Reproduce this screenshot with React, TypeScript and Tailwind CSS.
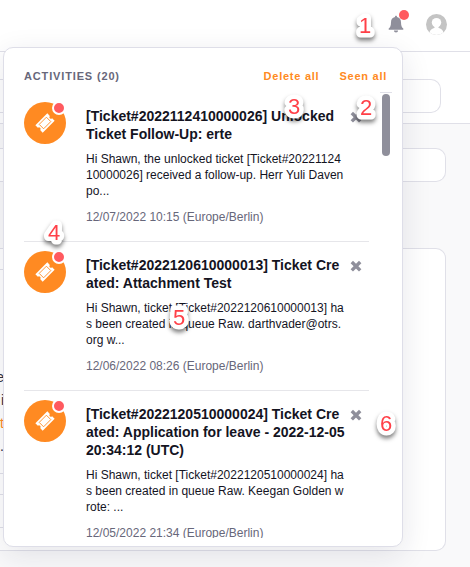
import React from 'react';

type Activity = { title: string[]; body: string[]; date: string };

const activities: Activity[] = [
  {
    title: ['[Ticket#2022112410000026] Unlocked', 'Ticket Follow-Up: erte'],
    body: ['Hi Shawn, the unlocked ticket [Ticket#20221124', '10000026] received a follow-up. Herr Yuli Daven', 'po...'],
    date: '12/07/2022 10:15 (Europe/Berlin)',
  },
  {
    title: ['[Ticket#2022120610000013] Ticket Cre', 'ated: Attachment Test'],
    body: ['Hi Shawn, ticket [Ticket#2022120610000013] ha', 's been created in queue Raw. darthvader@otrs.', 'org w...'],
    date: '12/06/2022 08:26 (Europe/Berlin)',
  },
  {
    title: ['[Ticket#2022120510000024] Ticket Cre', 'ated: Application for leave - 2022-12-05', '20:34:12 (UTC)'],
    body: ['Hi Shawn, ticket [Ticket#2022120510000024] ha', 's been created in queue Raw. Keegan Golden w', 'rote: ...'],
    date: '12/05/2022 21:34 (Europe/Berlin)',
  },
];

function TicketIcon() {
  return (
    <svg width="22" height="22" viewBox="-11 -11 22 22" className="block">
      <g transform="rotate(-45) scale(0.94)">
        <path d="M-9-5.5H9V-1.700A1.700 1.700 0 0 0 9 1.700V5.500H-9V1.700A1.700 1.700 0 0 0-9-1.700Z" fill="#fff" />
        <rect x="-5.400" y="-3.300" width="10.800" height="6.600" fill="none" stroke="#ff8a22" strokeWidth="0.900" />
      </g>
    </svg>
  );
}

function CloseIcon() {
  return (
    <svg width="12" height="12" viewBox="0 0 12 12" className="block">
      <path d="M1.8 2 10.2 10.400M10.200 2 1.800 10.400" stroke="#8f8f9b" strokeWidth="3.400" />
    </svg>
  );
}

function ActivityRow({ item, last }: { item: Activity; last: boolean }) {
  return (
    <div className={`flex w-[345px] pt-[9px] pb-4 ${last ? '' : 'border-b border-[#e6e6ea]'}`}>
      <div className="relative flex h-[42px] w-[42px] shrink-0 items-center justify-center rounded-full bg-[#ff8a22]">
        <TicketIcon />
        <span className="absolute -top-[1px] left-[28px] h-[14px] w-[14px] rounded-full border-2 border-white bg-[#ff5a5f]" />
      </div>
      <div className="ml-5 w-[264px] shrink-0 whitespace-nowrap pt-[5px]">
        <div className="text-[14px] font-bold leading-[18px] text-[#14141f]">
          {item.title.map((t) => <div key={t}>{t}</div>)}
        </div>
        <div className="mt-2 text-[12px] leading-4 text-[#14141f]">
          {item.body.map((t) => <div key={t}>{t}</div>)}
        </div>
        <div className="mt-[10px] text-[12px] leading-4 text-[#67677a]">{item.date}</div>
      </div>
      <div className="pt-[9px]"><CloseIcon /></div>
    </div>
  );
}

const markers = [
  { n: '1', x: 365, y: 25 },
  { n: '2', x: 366, y: 107 },
  { n: '3', x: 294, y: 106 },
  { n: '4', x: 54, y: 232 },
  { n: '5', x: 179, y: 317 },
  { n: '6', x: 386, y: 423 },
];

export default function App() {
  return (
    <div className="relative h-[567px] w-[470px] overflow-hidden bg-[#f9f9fa] font-['Liberation_Sans',Arial,sans-serif]">
      <header className="flex h-[52px] items-start justify-end border-b border-[#e0e0e8] bg-white pr-[23px]">
        <div className="relative mt-[15px] mr-[22px]">
          <svg width="16" height="18" viewBox="0 0 16 18" className="block">
            <path d="M8 .8C7.3.8 7 1.3 7 2 4.3 2.5 3 4.6 3 7.2 3 11 2 12.3.7 13.6V14.8H15.3V13.6C14 12.3 13 11 13 7.2 13 4.6 11.700 2.500 9 2 9 1.300 8.700.8 8 .8ZM5.900 15.500A2.100 2.100 0 0 0 10.100 15.500Z" fill="#8f8f9b" />
          </svg>
          <span className="absolute -top-[5px] left-[11px] h-[10px] w-[10px] rounded-full bg-[#ff5a5f]" />
        </div>
        <svg width="21" height="21" viewBox="0 0 21 21" className="mt-[14px] block">
          <defs><clipPath id="avatar"><circle cx="10.5" cy="10.500" r="10.500" /></clipPath></defs>
          <g clipPath="url(#avatar)">
            <rect width="21" height="21" fill="#c4c4c4" />
            <circle cx="10.500" cy="8.600" r="4.700" fill="#fff" />
            <path d="M8.500 11H12.500V14C15.500 14.800 17.500 16 18 21H3C3.500 16 5.500 14.800 8.500 14Z" fill="#fff" />
          </g>
        </svg>
      </header>
      <div className="h-[72px] border-b border-[#e0e0e8] bg-white pt-[27px]">
        <div className="h-[34px] w-[441px] rounded-r-[10px] border border-l-0 border-[#e0e0e8] bg-white" />
      </div>
      <div className="mt-6 h-[34px] w-[446px] rounded-r-[10px] border border-l-0 border-[#e0e0e8] bg-white" />
      <main className="mt-[66px] h-[303px] w-[446px] overflow-hidden rounded-r-[10px] border border-l-0 border-[#e0e0e8] bg-white">
        <div className="w-[300px]">
          <div className="h-[21px] border-b border-[#e0e0e8]" />
          <div className="flex h-[204px] flex-col border-b border-[#e0e0e8] pt-[96px] text-[14px] leading-[23px] text-[#33333f]">
            <div className="flex w-1 flex-col items-end">
              <span>e</span><span>i</span><span className="text-[#ff8a22]">t</span><span>.</span>
            </div>
          </div>
          <div className="h-[21px] border-b border-[#e0e0e8]" />
          <div className="h-[33px] border-b border-[#e0e0e8]" />
        </div>
      </main>

      <section className="absolute left-[3px] top-[47px] flex h-[500px] w-[400px] flex-col rounded-[10px] border border-[#dedee8] bg-white pl-5 shadow-[0_8px_30px_rgba(30,30,60,0.11)]">
        <div className="flex h-[44px] items-start whitespace-nowrap pt-5 pr-[15px] text-[11px] font-bold leading-4">
          <h2 className="tracking-[0.85px] text-[#67677a]">ACTIVITIES (20)</h2>
          <button className="ml-auto tracking-[0.75px] text-[#ff8a22]">Delete all</button>
          <button className="ml-[20px] tracking-[0.75px] text-[#ff8a22]">Seen all</button>
        </div>
        <div className="flex h-[446px] overflow-hidden">
          <div className="h-[446px] w-[356px] shrink-0 overflow-hidden pt-[1px]">
            {activities.map((a, i) => <ActivityRow key={a.date} item={a} last={i === 2} />)}
          </div>
          <div className="flex w-3 flex-col items-center border-t border-[#e0e0e8] pt-[1px]">
            <div className="h-[62px] w-2 rounded-full bg-[#8f8f9b]" />
          </div>
        </div>
      </section>

      <svg width="470" height="567" className="pointer-events-none absolute left-0 top-0">
        {markers.map((m) => (
          <text
            key={m.n}
            x={m.x}
            y={m.y + 8}
            textAnchor="middle"
            fontSize="22"
            fill="#ff4048"
            stroke="#fff"
            strokeWidth="9"
            strokeLinejoin="round"
            className="[paint-order:stroke] [filter:drop-shadow(0_3px_2px_rgba(0,0,0,0.5))]"
          >
            {m.n}
          </text>
        ))}
      </svg>
    </div>
  );
}
